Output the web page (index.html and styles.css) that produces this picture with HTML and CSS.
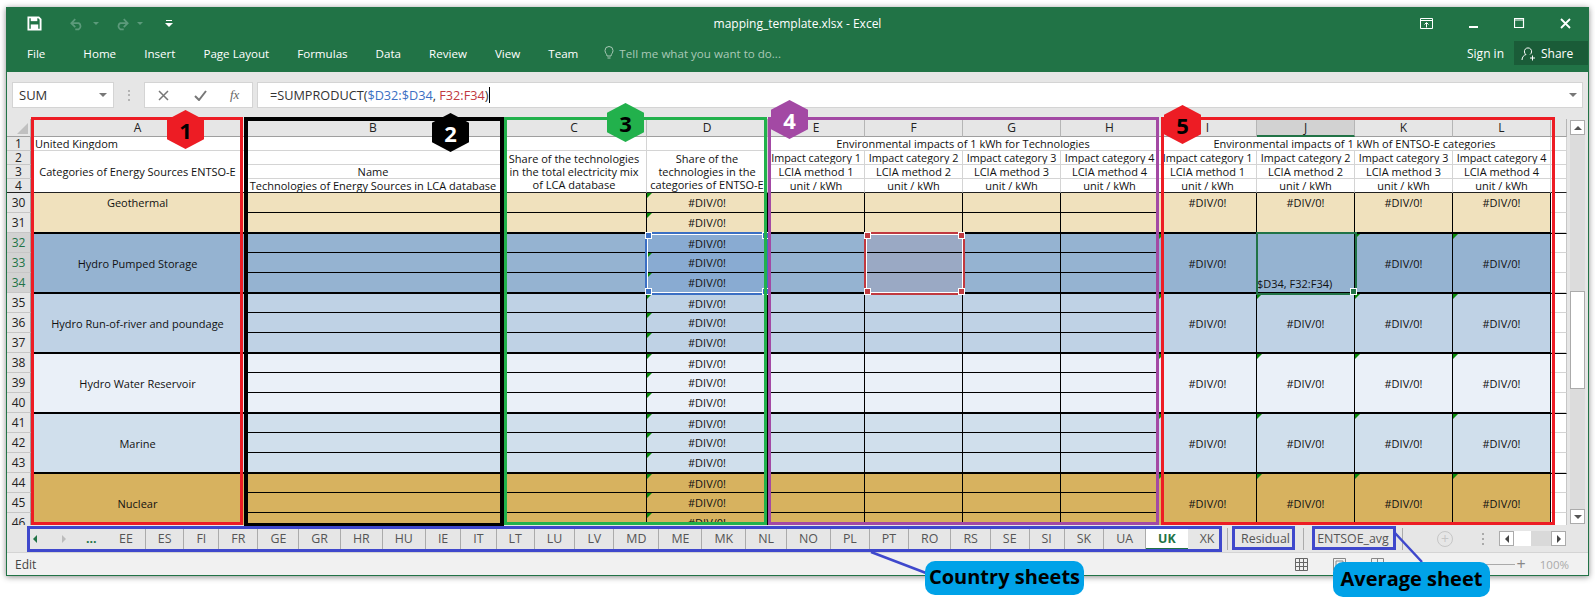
FILE: index.html
```html
<!DOCTYPE html>
<html>
<head>
	<title>mapping_template.xlsx - Excel</title>
	<link rel="stylesheet" href="styles.css">
</head>
<body>
<div class="page">
	<div class="window">
		<!-- title bar -->
		<div class="titlebar">
			<div class="qat">
				<svg class="qat-save" width="15" height="15" viewBox="0 0 16 16"><path d="M1.500 1.500h11l2 2v11h-13z" fill="none" stroke="#fff" stroke-width="2"/><path d="M4 1.500h7v4H4z" fill="#fff"/><path d="M4 9h8v5.500H4z" fill="#fff"/></svg>
				<svg class="qat-undo" width="14" height="14" viewBox="0 0 16 14"><path d="M2 6h8a4 4 0 0 1 0 7H6M6 1.500 1.500 6 6 10.500" fill="none" stroke="#5c9a7b" stroke-width="2"/></svg>
				<span class="qat-arrow"></span>
				<svg class="qat-redo" width="14" height="14" viewBox="0 0 16 14"><path d="M14 6H6a4 4 0 0 0 0 7h4M10 1.500 14.500 6 10 10.500" fill="none" stroke="#5c9a7b" stroke-width="2"/></svg>
				<span class="qat-arrow arrow2"></span>
				<svg class="qat-more" width="8" height="9" viewBox="0 0 8 9"><path d="M1 1h6v1H1z M0 4h8L4 8z" fill="#fff"/></svg>
			</div>
			<div class="doc-title">mapping_template.xlsx - Excel</div>
			<div class="win-btns">
				<svg width="14" height="12" viewBox="0 0 14 12"><path d="M.5.500h12v10H.5z M.5 2.500h12" fill="none" stroke="#fff"/><path d="M6.500 9.500V5M4.500 6.500l2-2 2 2" fill="none" stroke="#fff"/></svg>
				<svg width="10" height="10" viewBox="0 0 10 10"><path d="M0 7h9v2H0z" fill="#fff"/></svg>
				<svg width="11" height="11" viewBox="0 0 11 11"><path d="M.5.500h9v9h-9z M.5 2h9" fill="none" stroke="#fff" stroke-width="1.200"/></svg>
				<svg width="11" height="11" viewBox="0 0 11 11"><path d="M1 1l9 9M10 1l-9 9" stroke="#fff" stroke-width="1.800"/></svg>
			</div>
		</div>
		<div class="ribbon">
			<span class="rtab rtab-file">File</span>
			<span class="rtab">Home</span>
			<span class="rtab">Insert</span>
			<span class="rtab">Page Layout</span>
			<span class="rtab">Formulas</span>
			<span class="rtab">Data</span>
			<span class="rtab">Review</span>
			<span class="rtab">View</span>
			<span class="rtab">Team</span>
			<span class="tell">
				<svg width="10" height="14" viewBox="0 0 10 14"><path d="M3 10c0-2-2-3-2-5.500a4 4 0 0 1 8 0C9 7 7 8 7 10z M3.500 12h3" fill="none" stroke="#a9c9b7"/></svg>
				Tell me what you want to do...
			</span>
			<span class="signin">Sign in</span>
			<span class="share">
				<svg width="15" height="15" viewBox="0 0 15 15"><path d="M1 14c0-3 2-5 4-5.500A3.600 3.600 0 1 1 9 8.500M9 12h5M11.500 9.500v5" fill="none" stroke="#fff"/></svg>
				Share
			</span>
		</div>

		<!-- formula bar -->
		<div class="formula-row">
			<div class="namebox"><span>SUM</span><i class="down"></i></div>
			<div class="dots"></div>
			<div class="fbtns">
				<svg width="11" height="11" viewBox="0 0 11 11"><path d="M1 1l9 9M10 1l-9 9" stroke="#777" stroke-width="1.500"/></svg>
				<svg width="13" height="11" viewBox="0 0 13 11"><path d="M1 6l4 4 7-9" fill="none" stroke="#777" stroke-width="2"/></svg>
				<span class="fx">fx</span>
			</div>
			<div class="finput">
				<span>=SUMPRODUCT(<b class="ref-blue">$D32:$D34</b>, <b class="ref-red">F32:F34</b>)</span><i class="caret"></i>
				<i class="down fdown"></i>
			</div>
		</div>

		<!-- sheet -->
		<div class="sheet">
			<div class="gridwrap">
				<table class="grid">
					<colgroup>
						<col class="c-head"><col class="c-a"><col class="c-b"><col class="c-c"><col class="c-d"><col class="c-e">
						<col class="c-n"><col class="c-n"><col class="c-n"><col class="c-n"><col class="c-n"><col class="c-n"><col class="c-n"><col class="c-m">
					</colgroup>
					<tr class="colhead">
						<th class="corner"><i></i></th><th>A</th><th>B</th><th>C</th><th>D</th><th>E</th><th>F</th><th>G</th><th>H</th><th>I</th><th class="cur">J</th><th>K</th><th>L</th><th></th>
					</tr>
					<tr class="h1">
						<th>1</th><td class="left">United Kingdom</td><td></td><td></td><td></td><td colspan="4">Environmental impacts of 1 kWh for Technologies</td><td colspan="4">Environmental impacts of 1 kWh of ENTSO-E categories</td><td></td>
					</tr>
					<tr class="h2">
						<th>2</th><td rowspan="3">Categories of Energy Sources ENTSO-E</td><td></td>
						<td rowspan="3">Share of the technologies<br>in the total electricity mix<br>of LCA database</td>
						<td rowspan="3">Share of the<br>technologies in the<br>categories of ENTSO-E</td>
						<td>Impact category 1</td><td>Impact category 2</td><td>Impact category 3</td><td>Impact category 4</td>
						<td>Impact category 1</td><td>Impact category 2</td><td>Impact category 3</td><td>Impact category 4</td><td></td>
					</tr>
					<tr class="h3">
						<th>3</th><td>Name</td>
						<td>LCIA method 1</td><td>LCIA method 2</td><td>LCIA method 3</td><td>LCIA method 4</td>
						<td>LCIA method 1</td><td>LCIA method 2</td><td>LCIA method 3</td><td>LCIA method 4</td><td></td>
					</tr>
					<tr class="h4">
						<th>4</th><td>Technologies of Energy Sources in LCA database</td>
						<td>unit / kWh</td><td>unit / kWh</td><td>unit / kWh</td><td>unit / kWh</td>
						<td>unit / kWh</td><td>unit / kWh</td><td>unit / kWh</td><td>unit / kWh</td><td></td>
					</tr>

					<tr class="row tan">
						<th>30</th><td rowspan="2" class="top">Geothermal</td><td></td><td></td><td class="err">#DIV/0!</td><td></td><td></td><td></td><td></td>
						<td rowspan="2" class="top">#DIV/0!</td><td rowspan="2" class="top">#DIV/0!</td><td rowspan="2" class="top">#DIV/0!</td><td rowspan="2" class="top">#DIV/0!</td><td class="blank"></td>
					</tr>
					<tr class="row tan">
						<th>31</th><td></td><td></td><td class="err">#DIV/0!</td><td></td><td></td><td></td><td></td><td class="blank"></td>
					</tr>

					<tr class="row pump first">
						<th class="picked">32</th><td rowspan="3">Hydro Pumped Storage</td><td></td><td></td><td class="err range-d">#DIV/0!</td><td></td><td class="range-f"></td><td></td><td></td>
						<td rowspan="3" class="err">#DIV/0!</td><td rowspan="3" class="active"><span>$D34, F32:F34)</span></td><td rowspan="3" class="err">#DIV/0!</td><td rowspan="3" class="err">#DIV/0!</td><td class="blank"></td>
					</tr>
					<tr class="row pump">
						<th class="picked">33</th><td></td><td></td><td class="err range-d">#DIV/0!</td><td></td><td class="range-f"></td><td></td><td></td><td class="blank"></td>
					</tr>
					<tr class="row pump">
						<th class="picked">34</th><td></td><td></td><td class="err range-d">#DIV/0!</td><td></td><td class="range-f"></td><td></td><td></td><td class="blank"></td>
					</tr>

					<tr class="row ror first">
						<th>35</th><td rowspan="3">Hydro Run-of-river and poundage</td><td></td><td></td><td class="err">#DIV/0!</td><td></td><td></td><td></td><td></td>
						<td rowspan="3" class="err">#DIV/0!</td><td rowspan="3" class="err">#DIV/0!</td><td rowspan="3" class="err">#DIV/0!</td><td rowspan="3" class="err">#DIV/0!</td><td class="blank"></td>
					</tr>
					<tr class="row ror">
						<th>36</th><td></td><td></td><td class="err">#DIV/0!</td><td></td><td></td><td></td><td></td><td class="blank"></td>
					</tr>
					<tr class="row ror">
						<th>37</th><td></td><td></td><td class="err">#DIV/0!</td><td></td><td></td><td></td><td></td><td class="blank"></td>
					</tr>

					<tr class="row res first">
						<th>38</th><td rowspan="3">Hydro Water Reservoir</td><td></td><td></td><td class="err">#DIV/0!</td><td></td><td></td><td></td><td></td>
						<td rowspan="3" class="err">#DIV/0!</td><td rowspan="3" class="err">#DIV/0!</td><td rowspan="3" class="err">#DIV/0!</td><td rowspan="3" class="err">#DIV/0!</td><td class="blank"></td>
					</tr>
					<tr class="row res">
						<th>39</th><td></td><td></td><td class="err">#DIV/0!</td><td></td><td></td><td></td><td></td><td class="blank"></td>
					</tr>
					<tr class="row res">
						<th>40</th><td></td><td></td><td class="err">#DIV/0!</td><td></td><td></td><td></td><td></td><td class="blank"></td>
					</tr>

					<tr class="row mar first">
						<th>41</th><td rowspan="3">Marine</td><td></td><td></td><td class="err">#DIV/0!</td><td></td><td></td><td></td><td></td>
						<td rowspan="3" class="err">#DIV/0!</td><td rowspan="3" class="err">#DIV/0!</td><td rowspan="3" class="err">#DIV/0!</td><td rowspan="3" class="err">#DIV/0!</td><td class="blank"></td>
					</tr>
					<tr class="row mar">
						<th>42</th><td></td><td></td><td class="err">#DIV/0!</td><td></td><td></td><td></td><td></td><td class="blank"></td>
					</tr>
					<tr class="row mar">
						<th>43</th><td></td><td></td><td class="err">#DIV/0!</td><td></td><td></td><td></td><td></td><td class="blank"></td>
					</tr>

					<tr class="row nuc first">
						<th>44</th><td rowspan="3">Nuclear</td><td></td><td></td><td class="err">#DIV/0!</td><td></td><td></td><td></td><td></td>
						<td rowspan="3" class="err">#DIV/0!</td><td rowspan="3" class="err">#DIV/0!</td><td rowspan="3" class="err">#DIV/0!</td><td rowspan="3" class="err">#DIV/0!</td><td class="blank"></td>
					</tr>
					<tr class="row nuc">
						<th>45</th><td></td><td></td><td class="err">#DIV/0!</td><td></td><td></td><td></td><td></td><td class="blank"></td>
					</tr>
					<tr class="row nuc">
						<th>46</th><td></td><td></td><td class="err">#DIV/0!</td><td></td><td></td><td></td><td></td><td class="blank"></td>
					</tr>
				</table>
			</div>
			<div class="vscroll">
				<div class="sbtn"><i class="tri-up"></i></div>
				<div class="vtrack"><div class="vthumb"></div></div>
				<div class="sbtn"><i class="tri-down"></i></div>
			</div>
		</div>

		<!-- sheet tabs -->
		<div class="tabbar">
			<div class="tabnav">
				<i class="tri-left"></i><i class="tri-right"></i><span class="more">...</span>
			</div>
			<div class="tabs">
				<span>EE</span><span>ES</span><span>FI</span><span>FR</span><span>GE</span><span>GR</span><span>HR</span><span>HU</span><span>IE</span><span>IT</span><span>LT</span><span>LU</span><span>LV</span><span>MD</span><span>ME</span><span>MK</span><span>NL</span><span>NO</span><span>PL</span><span>PT</span><span>RO</span><span>RS</span><span>SE</span><span>SI</span><span>SK</span><span>UA</span><span class="on">UK</span><span class="xk">XK</span>
			</div>
			<div class="tabs2">
				<span class="t-res">Residual</span><span class="t-avg">ENTSOE_avg</span>
			</div>
			<div class="addsheet">+</div>
			<div class="vdots"></div>
			<div class="hscroll">
				<div class="hbtn"><i class="tri-left dark"></i></div>
				<div class="hthumb"></div>
				<div class="htrack"></div>
				<div class="hbtn"><i class="tri-right dark"></i></div>
			</div>
		</div>

		<!-- status bar -->
		<div class="statusbar">
			<span class="mode">Edit</span>
			<div class="views">
				<svg width="13" height="13" viewBox="0 0 13 13"><path d="M.5.500h12v12H.5z M.5 4.500h12 M.5 8.500h12 M4.500.500v12 M8.500.500v12" fill="none" stroke="#666"/></svg>
				<svg width="13" height="13" viewBox="0 0 13 13"><path d="M.5.500h12v12H.5z M3 3h7v8H3z" fill="none" stroke="#888"/></svg>
				<svg width="13" height="13" viewBox="0 0 13 13"><path d="M.5.500h12v12H.5z M6.500.500v12 M.5 6.500h12" fill="none" stroke="#888"/></svg>
			</div>
			<div class="zoombar"><span class="zline"></span><span class="zplus">+</span><span class="zpct">100%</span></div>
		</div>
	</div>

	<!-- range selections drawn by Excel over the cells -->
	<div class="range range-blue"><i class="tl"></i><i class="bl"></i><i class="tr"></i><i class="br"></i></div>
	<div class="range range-red"><i class="tl"></i><i class="bl"></i><i class="tr"></i><i class="br"></i></div>
	<div class="range range-green"><i class="br"></i></div>

	<!-- annotations pasted on top of the screenshot -->
	<div class="box box1"></div>
	<div class="box box2"></div>
	<div class="box box3"></div>
	<div class="box box4"></div>
	<div class="box box5"></div>
	<div class="hex hex1">1</div>
	<div class="hex hex2">2</div>
	<div class="hex hex3">3</div>
	<div class="hex hex4">4</div>
	<div class="hex hex5">5</div>

	<div class="box tabbox tab-country"></div>
	<div class="box tabbox tab-residual"></div>
	<div class="box tabbox tab-avg"></div>
	<svg class="leaders" width="1595" height="600" viewBox="0 0 1595 600">
		<path d="M871 552 926 573 M1395 533 1422 562" stroke="#3f48cc" stroke-width="2.500" fill="none"/>
	</svg>
	<div class="callout call-country">Country sheets</div>
	<div class="callout call-avg">Average sheet</div>
</div>
</body>
</html>
```

FILE: styles.css
```css
* {
	box-sizing: border-box;
}
body {
	margin: 0;
	background: #fff;
	font-family: "Open Sans", "Noto Sans", sans-serif;
	font-size: 12px;
	color: #222;
}
i {
	display: block;
}
.page {
	position: relative;
	width: 1595px;
	height: 600px;
	overflow: hidden;
}
.window {
	margin: 7px 0 0 6px;
	width: 1583px;
	height: 569px;
	border: 1px solid #217346;
	border-top: 0;
	background: #e6e6e6;
	box-shadow: 0 1px 6px rgba(0,0,0,.45);
	display: flex;
	flex-direction: column;
}

/* title bar */
.titlebar {
	height: 33px;
	background: #217346;
	display: grid;
	grid-template-columns: 1fr auto 1fr;
	align-items: center;
	color: #fff;
}
.qat {
	display: flex;
	align-items: center;
	padding-left: 20px;
}
.qat-undo {
	margin-left: 28px;
}
.qat-redo {
	margin-left: 16px;
}
.qat-arrow {
	margin-left: 9px;
	border: 3px solid transparent;
	border-top: 3px solid #5c9a7b;
	border-bottom: 0;
}
.arrow2 {
	margin-left: 8px;
}
.qat-more {
	margin-left: 22px;
}
.doc-title {
	font-size: 12px;
}
.win-btns {
	display: flex;
	justify-content: flex-end;
	align-items: center;
	gap: 35px;
	padding-right: 17px;
}
.ribbon {
	height: 32px;
	padding-bottom: 6px;
	background: #217346;
	color: #fff;
	display: flex;
	align-items: center;
}
.rtab {
	margin-right: 28px;
	font-size: 11.600px;
}
.rtab-file {
	margin-left: 20px;
	margin-right: 38px;
}
.tell {
	color: #a9c9b7;
	display: flex;
	align-items: center;
	gap: 5px;
	margin-left: -2px;
	font-size: 11.600px;
}
.signin {
	margin-left: auto;
	margin-right: 10px;
}
.share {
	width: 74px;
	height: 24px;
	background: #1a5c38;
	display: flex;
	align-items: center;
	gap: 5px;
	padding-left: 7px;
}

/* formula bar */
.formula-row {
	display: flex;
	height: 47px;
	padding: 10px 5px 11px 5px;
	align-items: stretch;
}
.namebox, .fbtns, .finput {
	background: #fff;
	border: 1px solid #d4d4d4;
	display: flex;
	align-items: center;
}
.namebox {
	width: 102px;
	padding: 0 6px;
	justify-content: space-between;
	font-size: 13px;
	color: #333;
}
.down {
	border: 4px solid transparent;
	border-top: 4px solid #777;
	border-bottom: 0;
}
.dots {
	width: 30px;
	display: flex;
	align-items: center;
	justify-content: center;
}
.dots::after {
	content: "";
	width: 2px;
	height: 11px;
	background: repeating-linear-gradient(#b4b4b4 0 2px, transparent 2px 4.500px);
}
.fbtns {
	width: 109px;
	padding-left: 13px;
	gap: 25px;
}
.fx {
	font-family: "Liberation Serif", serif;
	font-style: italic;
	font-size: 13px;
	color: #666;
	margin-left: -2px;
}
.finput {
	margin-left: 4px;
	flex: 1;
	padding: 0 5px 0 12px;
	font-size: 12.700px;
	color: #333;
}
.ref-blue {
	font-weight: normal;
	color: #3b6fc3;
}
.ref-red {
	font-weight: normal;
	color: #c0393f;
}
.caret {
	width: 1px;
	height: 16px;
	background: #000;
	margin-left: 1px;
}
.fdown {
	margin-left: auto;
}

/* sheet */
.sheet {
	display: flex;
	height: 406px;
}
.gridwrap {
	width: 1560px;
	overflow: hidden;
	background: #fff;
}
.grid {
	table-layout: fixed;
	border-collapse: separate;
	border-spacing: 0;
	width: 1560px;
	font-size: 11px;
	line-height: 13px;
	color: #111;
}
.c-head { width: 24px; }
.c-a { width: 214px; }
.c-b { width: 257px; }
.c-c { width: 145px; }
.c-d { width: 121px; }
.c-e { width: 97px; }
.c-n { width: 98px; }
.c-m { width: 16px; }
.grid th, .grid td {
	padding: 0;
	text-align: center;
	vertical-align: middle;
	white-space: nowrap;
	font-weight: normal;
}
.grid td {
	overflow: hidden;
	border-right: 1px solid #d4d4d4;
	border-bottom: 1px solid #d4d4d4;
}
.grid th {
	background: #e6e6e6;
	font-size: 12px;
	color: #222;
	border-right: 1px solid #9f9f9f;
	border-bottom: 1px solid #c6c6c6;
}
.colhead th {
	height: 18px;
	border-right: 1px solid #b5b5b5;
	border-bottom: 1px solid #9f9f9f;
}
.colhead .cur {
	background: #d2d2d2;
	border-bottom: 2px solid #217346;
}
.corner i {
	width: 0;
	height: 0;
	margin: 2px 2px 0 auto;
	border-left: 11px solid transparent;
	border-bottom: 11px solid #c0c0c0;
}
.h1 th, .h1 td { height: 14px; }
.h2 th, .h2 td { height: 14px; }
.h3 th, .h3 td { height: 14px; }
.h4 th, .h4 td { height: 14px; border-bottom: 1px solid #222; }
.h2 td[rowspan] { border-bottom: 1px solid #222; }
.h2 td:not([rowspan]) { font-size: 10.800px; }
.left {
	text-align: left !important;
	padding-left: 4px !important;
}

.row th, .row td {
	height: 20px;
}
.row td {
	border-right: 1px solid #000;
	border-bottom: 1px solid #000;
}
.row th {
	border-bottom: 1px solid #c6c6c6;
}
.row .picked {
	background: #d2d2d2;
	color: #217346;
}
.row.first td {
	border-top: 1px solid #000;
}
.row .blank {
	background: #fff;
	border: 0;
	border-right: 1px solid #c6c6c6;
	border-bottom: 1px solid #d4d4d4;
}
.tan td { background: #f0e1bd; }
.pump td { background: #95b3d1; }
.ror td { background: #bfd2e5; }
.res td { background: #eaf0f8; }
.mar td { background: #d0dfec; }
.nuc td { background: #d7b25f; }
.pump .range-d { background: #89abd2; }
.pump .range-f { background: #9aa9c4; }
.top {
	vertical-align: top !important;
	padding-top: 3px !important;
}
.err {
	position: relative;
}
.err::before {
	content: "";
	position: absolute;
	left: 0;
	top: 0;
	border-top: 5px solid #0a8a0a;
	border-right: 5px solid transparent;
}
.active {
	vertical-align: bottom !important;
	text-align: right !important;
	padding-bottom: 2px !important;
	padding-right: 24px !important;
}

.vscroll {
	width: 15px;
	margin: 1px 0 1px 3px;
	display: flex;
	flex-direction: column;
}
.sbtn {
	height: 15px;
	background: #fff;
	border: 1px solid #ababab;
	display: flex;
	align-items: center;
	justify-content: center;
}
.vtrack {
	flex: 1;
	background: #dcdcdc;
	padding-top: 156px;
}
.vthumb {
	height: 98px;
	background: #fff;
	border: 1px solid #ababab;
}
.tri-up {
	border: 4px solid transparent;
	border-bottom: 4px solid #555;
	border-top: 0;
}
.tri-down {
	border: 4px solid transparent;
	border-top: 4px solid #555;
	border-bottom: 0;
}

/* sheet tabs */
.tabbar {
	height: 27px;
	display: flex;
	align-items: center;
	background: #e6e6e6;
	color: #555;
	font-size: 12.400px;
}
.tabnav {
	width: 100px;
	flex: none;
	display: flex;
	align-items: center;
	padding-left: 26px;
}
.tri-left {
	border: 4px solid transparent;
	border-right: 4px solid #217346;
	border-left: 0;
}
.tri-right {
	border: 4px solid transparent;
	border-left: 4px solid #bcbcbc;
	border-right: 0;
	margin-left: 25px;
}
.more {
	margin-left: 20px;
	font-weight: bold;
	color: #217346;
}
.tabs {
	display: flex;
	flex: none;
	width: 1120px;
}
.tabs span, .tabs2 span {
	height: 22px;
	line-height: 22px;
	padding: 0 12px;
	border-right: 1px solid #ababab;
	flex: none;
}
.tabs .on {
	background: #fff;
	color: #217346;
	font-weight: bold;
	border-right: 0;
	border-bottom: 2px solid #217346;
}
.tabs .xk {
	border-right: 0;
}
.tabs2 {
	display: flex;
	flex: none;
	border-left: 1px solid #ababab;
}
.tabs2 .t-res {
	width: 76px;
	padding: 0;
	text-align: center;
}
.tabs2 .t-avg {
	width: 99px;
	padding: 0;
	text-align: center;
}
.addsheet {
	width: 16px;
	height: 16px;
	flex: none;
	border: 1px solid #c6c6c6;
	border-radius: 50%;
	color: #c6c6c6;
	margin-left: 34px;
	line-height: 13px;
	text-align: center;
	font-size: 14px;
}
.vdots {
	width: 2px;
	height: 12px;
	flex: none;
	margin-left: 29px;
	background: repeating-linear-gradient(#aaa 0 2px, transparent 2px 5px);
}
.hscroll {
	margin-left: 15px;
	display: flex;
	flex: none;
	height: 15px;
	width: 67px;
	background: #d9d9d9;
}
.hbtn {
	width: 15px;
	background: #fff;
	border: 1px solid #ababab;
	display: flex;
	align-items: center;
	justify-content: center;
}
.hthumb {
	width: 17px;
	background: #fff;
}
.htrack {
	flex: 1;
}
.tri-left.dark {
	border-right-color: #444;
}
.tri-right.dark {
	border-left-color: #444;
	margin-left: 0;
}

/* status bar */
.statusbar {
	flex: 1;
	background: #f1f1f1;
	border-top: 1px solid #d4d4d4;
	display: flex;
	align-items: center;
	padding-left: 8px;
	color: #444;
}
.views {
	margin-left: auto;
	display: flex;
	gap: 25px;
}
.zoombar {
	display: flex;
	align-items: center;
	margin-left: 38px;
	margin-right: 19px;
	color: #aaa;
}
.zline {
	display: block;
	width: 33px;
	height: 1px;
	background: #aaa;
	margin-left: 60px;
}
.zplus {
	margin-left: 2px;
	font-size: 16px;
	line-height: 14px;
	color: #888;
}
.zpct {
	margin-left: 14px;
	font-size: 11.500px;
}

/* selections */
.range {
	position: absolute;
	top: 232px;
	height: 63px;
}
.range i {
	position: absolute;
	width: 7px;
	height: 7px;
	border: 1px solid #fff;
}
.range .tl { left: -2px; top: -2px; }
.range .bl { left: -2px; bottom: -2px; }
.range .tr { right: -2px; top: -2px; }
.range .br { right: -2px; bottom: -2px; }
.range-blue {
	left: 645px;
	width: 124px;
	border: 2px solid #3b6fc3;
	box-shadow: inset 0 0 0 1px #fff;
}
.range-blue i {
	background: #3b6fc3;
}
.range-red {
	left: 864px;
	width: 101px;
	border: 2px solid #c0393f;
	box-shadow: inset 0 0 0 1px #fff;
}
.range-red i {
	background: #c0393f;
}
.range-green {
	left: 1256px;
	width: 101px;
	border: 2px solid #217346;
}
.range-green i {
	background: #217346;
}

/* annotations */
.box {
	position: absolute;
	top: 117px;
	height: 408px;
	border-style: solid;
}
.box1 { left: 31px; width: 212px; border: 3px solid #ed1c24; }
.box2 { left: 244px; width: 260px; height: 410px; border: 4px solid #000; }
.box3 { left: 504px; width: 263px; border: 3px solid #22b14c; }
.box4 { left: 768px; width: 391px; border: 3px solid #a349a4; }
.box5 { left: 1161px; width: 394px; border: 3px solid #ed1c24; }
.hex {
	position: absolute;
	width: 37px;
	height: 39px;
	clip-path: polygon(50% 0, 100% 25%, 100% 75%, 50% 100%, 0 75%, 0 25%);
	display: flex;
	align-items: center;
	justify-content: center;
	font-size: 22px;
	font-weight: bold;
	color: #000;
}
.hex1 { left: 167px; top: 110px; background: #ed1c24; }
.hex2 { left: 432px; top: 113px; background: #000; color: #fff; }
.hex3 { left: 607px; top: 103px; background: #22b14c; }
.hex4 { left: 771px; top: 100px; background: #a349a4; color: #fff; }
.hex5 { left: 1164px; top: 105px; background: #ed1c24; }

.tabbox {
	top: 526px;
	border: 3px solid #3f48cc;
}
.tab-country { left: 27px; width: 1195px; height: 26px; }
.tab-residual { left: 1232px; width: 63px; height: 24px; }
.tab-avg { left: 1312px; width: 84px; height: 24px; }
.leaders {
	position: absolute;
	left: 0;
	top: 0;
}
.callout {
	position: absolute;
	background: #00a2e8;
	border-radius: 10px;
	font-weight: bold;
	font-size: 20px;
	color: #000;
	text-align: center;
}
.call-country {
	left: 925px;
	top: 561px;
	width: 159px;
	height: 34px;
	line-height: 32px;
}
.call-avg {
	left: 1333px;
	top: 562px;
	width: 157px;
	height: 35px;
	line-height: 33px;
}
```
